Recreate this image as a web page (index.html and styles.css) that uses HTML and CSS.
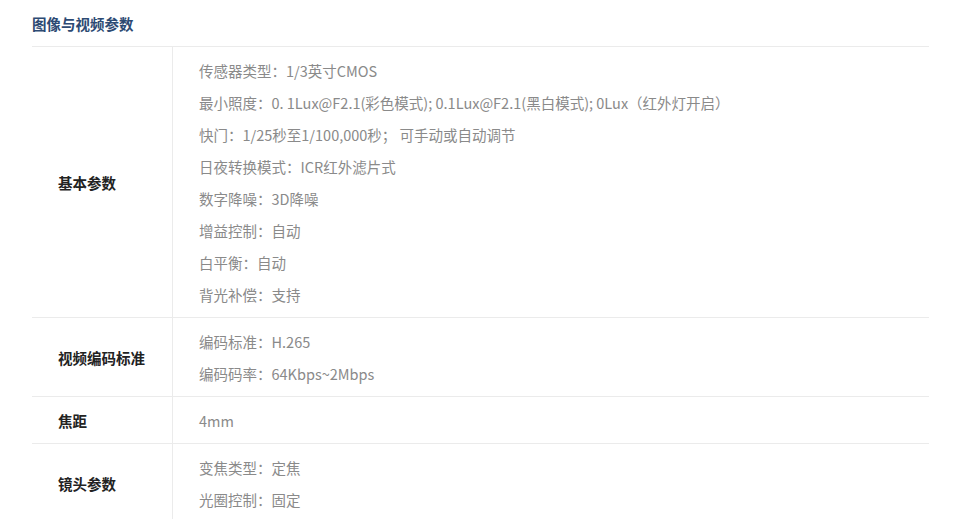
FILE: index.html
```html
<!DOCTYPE html>
<html lang="zh-CN">
<head>
    <meta charset="UTF-8">
    <meta name="viewport" content="width=device-width, initial-scale=1.0">
    <title>图像与视频参数</title>
    <link rel="stylesheet" href="styles.css">
</head>
<body>
    <div class="spec-section">
        <h3 class="spec-title">图像与视频参数</h3>
        <table class="spec-table">
            <tr>
                <td class="spec-label">基本参数</td>
                <td class="spec-value">
                    <p>传感器类型：1/3英寸CMOS</p>
                    <p>最小照度：0. 1Lux@F2.1(彩色模式); 0.1Lux@F2.1(黑白模式); 0Lux（红外灯开启）</p>
                    <p>快门：1/25秒至1/100,000秒； 可手动或自动调节</p>
                    <p>日夜转换模式：ICR红外滤片式</p>
                    <p>数字降噪：3D降噪</p>
                    <p>增益控制：自动</p>
                    <p>白平衡：自动</p>
                    <p>背光补偿：支持</p>
                </td>
            </tr>
            <tr>
                <td class="spec-label">视频编码标准</td>
                <td class="spec-value">
                    <p>编码标准：H.265</p>
                    <p>编码码率：64Kbps~2Mbps</p>
                </td>
            </tr>
            <tr>
                <td class="spec-label">焦距</td>
                <td class="spec-value">
                    <p>4mm</p>
                </td>
            </tr>
            <tr>
                <td class="spec-label">镜头参数</td>
                <td class="spec-value">
                    <p>变焦类型：定焦</p>
                    <p>光圈控制：固定</p>
                </td>
            </tr>
        </table>
    </div>
</body>
</html>
```

FILE: styles.css
```css
body {
    font-family: "Noto Sans CJK SC", "Noto Sans", sans-serif;
    margin: 0;
    padding: 0;
    background: #fff;
}
.spec-section {
    width: 897px;
    margin-left: 32px;
}
.spec-title {
    margin: 0;
    height: 46px;
    line-height: 48px;
    font-size: 14.5px;
    font-weight: bold;
    color: #2d4a73;
}
.spec-table {
    width: 100%;
    border-collapse: collapse;
}
.spec-table tr {
    border-top: 1px solid #ebebeb;
}
.spec-label {
    width: 113px;
    padding-left: 26px;
    font-size: 14.5px;
    font-weight: bold;
    color: #222;
    vertical-align: middle;
    border-right: 1px solid #ebebeb;
}
.spec-value {
    padding: 8px 26px 6px 26px;
    font-size: 14.5px;
    color: #8a8a8a;
}
.spec-value p {
    margin: 0;
    line-height: 32px;
}
```
